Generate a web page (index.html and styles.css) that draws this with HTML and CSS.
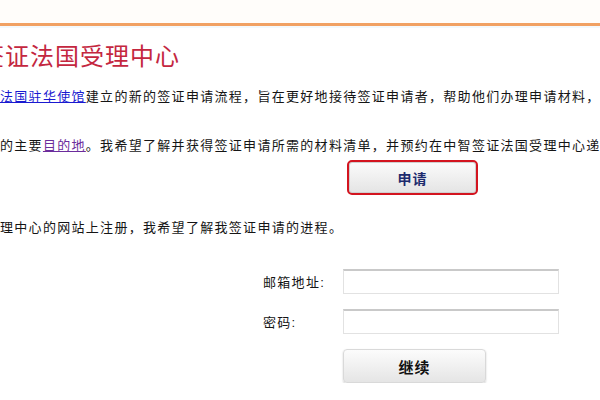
FILE: index.html
```html
<!DOCTYPE html>
<html lang="zh-CN">
<head>
    <meta charset="UTF-8">
    <title>中智签证法国受理中心</title>
    <link rel="stylesheet" href="styles.css">
</head>
<body>
    <div class="top-bar"></div>

    <div class="page">
        <h1 class="title">中智签证法国受理中心</h1>

        <p class="line first">
            <a href="#" class="link">法国驻华使馆</a>建立的新的签证申请流程，旨在更好地接待签证申请者，帮助他们办理申请材料，
        </p>

        <p class="line second">
            的主要<a href="#" class="link visited">目的地</a>。我希望了解并获得签证申请所需的材料清单，并预约在中智签证法国受理中心递
        </p>

        <div class="apply-row">
            <button type="button" class="btn-apply">申请</button>
        </div>

        <p class="line third">理中心的网站上注册，我希望了解我签证申请的进程。</p>

        <form class="login-form">
            <label for="email">邮箱地址:</label>
            <input type="text" id="email">

            <label for="password">密码:</label>
            <input type="password" id="password">

            <span></span>
            <button type="button" class="btn-continue">继续</button>
        </form>
    </div>
</body>
</html>
```

FILE: styles.css
```css
body {
    margin: 0;
    background-color: #fff;
    font-family: "Liberation Sans", "Noto Sans CJK SC", sans-serif;
    color: #151515;
}

/* Header line */
.top-bar {
    height: 23px;
    background-color: #fffdfa;
    border-bottom: 3px solid #f1a163;
    box-shadow: 0 2px 0 #f3f9fd;
}

.page {
    overflow: hidden;
    white-space: nowrap;
}

/* Title */
.title {
    margin: 16px 0 0 -70px;
    font-size: 24px;
    line-height: 30px;
    font-weight: normal;
    letter-spacing: 1px;
    color: #c4273f;
}

/* Text lines */
.line {
    margin: 0;
    font-size: 13px;
    line-height: 20px;
    letter-spacing: 1.3px;
}

.line.first {
    margin-top: 15px;
}

.line.second {
    margin-top: 29px;
}

.line.third {
    margin-top: 23px;
}

.link {
    color: #1a1ad0;
    text-decoration: underline;
}

.link.visited {
    color: #6b2c9c;
}

/* Apply button */
.apply-row {
    margin-top: 4px;
    padding-left: 347px;
}

.btn-apply {
    width: 131px;
    height: 35px;
    border: 2px solid #d3141f;
    border-radius: 5px;
    background: linear-gradient(#fbfbfb, #e4e4e4);
    box-shadow: inset 0 0 0 1px #cfcfcf;
    font-family: "Noto Sans CJK SC", sans-serif;
    font-size: 14px;
    font-weight: bold;
    color: #1d2b6e;
    letter-spacing: 1px;
    cursor: pointer;
}

/* Login form */
.login-form {
    display: grid;
    grid-template-columns: 80px 216px;
    row-gap: 15px;
    margin: 31px 0 0 263px;
    font-size: 13px;
    letter-spacing: 1.3px;
}

.login-form label {
    align-self: center;
}

.login-form input {
    box-sizing: border-box;
    height: 25px;
    margin: 0;
    border: 1px solid #e2e2e2;
    border-top: 2px solid #c9c9c9;
    background-color: #fff;
}

.btn-continue {
    width: 143px;
    height: 34px;
    border: 1px solid #d9d9d9;
    border-radius: 4px;
    background: linear-gradient(#fcfcfc, #e5e5e5);
    box-shadow: 0 1px 2px rgba(0, 0, 0, 0.2);
    font-family: "Noto Sans CJK SC", sans-serif;
    font-size: 15px;
    font-weight: bold;
    color: #111;
    letter-spacing: 1px;
    cursor: pointer;
}
```
